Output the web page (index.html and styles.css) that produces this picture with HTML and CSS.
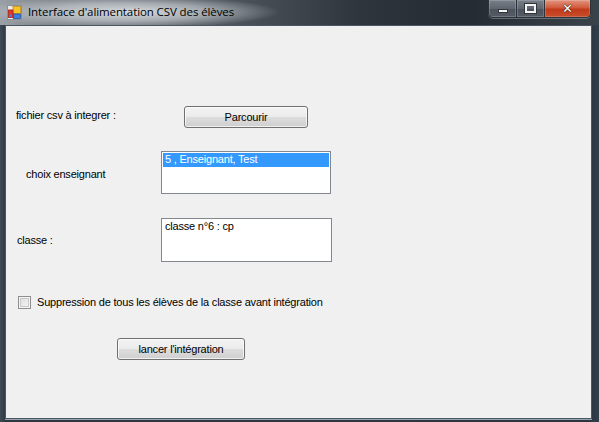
FILE: index.html
```html
<!DOCTYPE html>
<html lang="fr">
<head>
<meta charset="utf-8">
<title>Interface d'alimentation CSV des élèves</title>
<link rel="stylesheet" href="styles.css">
</head>
<body>
<div class="window">
  <div class="titlebar">
    <svg class="app-icon" width="15" height="15" viewBox="0 0 15 15">
      <rect x="0.5" y="0.5" width="14" height="14" fill="#e8eaec" stroke="#8a9096"/>
      <rect x="6" y="1.5" width="7.5" height="7" fill="#f7c325" stroke="#c98d0a" stroke-width="0.8"/>
      <rect x="1.5" y="5" width="4.5" height="7.5" fill="#e23a2a" stroke="#a81d12" stroke-width="0.8"/>
      <rect x="6.5" y="9" width="7" height="4.5" fill="#3d7ee0" stroke="#1e50a8" stroke-width="0.8"/>
      <rect x="2.5" y="9.5" width="2.5" height="2.5" fill="#3d7ee0"/>
    </svg>
    <span class="title">Interface d'alimentation CSV des élèves</span>
    <div class="controls">
      <div class="ctl ctl-min"><span class="glyph-min"></span></div>
      <div class="ctl ctl-max"><span class="glyph-max"></span></div>
      <div class="ctl ctl-close"><span class="glyph-close">✕</span></div>
    </div>
  </div>
  <div class="client">
    <div class="row row-file">
      <span class="label label-file">fichier csv à integrer :</span>
      <button class="btn btn-browse">Parcourir</button>
    </div>
    <div class="row row-teacher">
      <span class="label label-teacher">choix enseignant</span>
      <div class="listbox listbox-teacher">
        <div class="item selected">5 , Enseignant, Test</div>
      </div>
    </div>
    <div class="row row-class">
      <span class="label label-class">classe :</span>
      <div class="listbox listbox-class">
        <div class="item">classe n°6 : cp</div>
      </div>
    </div>
    <label class="row row-check">
      <span class="checkbox"></span>
      <span class="check-text">Suppression de tous les élèves de la classe avant intégration</span>
    </label>
    <div class="row row-run">
      <button class="btn btn-run">lancer l'intégration</button>
    </div>
  </div>
</div>
</body>
</html>
```

FILE: styles.css
```css
* { box-sizing: border-box; }

html, body {
  margin: 0;
  padding: 0;
  background: #2b3641;
}

.window {
  width: 599px;
  height: 422px;
  display: flex;
  flex-direction: column;
  background: linear-gradient(90deg, #3e4a55 0, #2d3843 6px, #2b3641 590px, #33404b 599px);
  overflow: hidden;
}

.titlebar {
  height: 25px;
  flex: none;
  display: flex;
  align-items: flex-start;
  position: relative;
  background:
    radial-gradient(ellipse 150px 16px at 130px 12px, rgba(235,238,240,0.85) 0, rgba(220,224,228,0.55) 55%, rgba(200,205,210,0) 100%),
    linear-gradient(90deg, #9aa0a5 0, #7c838a 50px, #50585f 220px, #2e353c 360px, #252b32 470px, #3a424a 599px);
}

.app-icon {
  margin: 5px 0 0 7px;
  flex: none;
}

.title {
  margin: 4px 0 0 6px;
  font-family: "Open Sans", "Liberation Sans", sans-serif;
  font-size: 11.5px;
  line-height: 16px;
  color: #000;
  letter-spacing: -0.1px;
}

.controls {
  margin-left: auto;
  margin-right: 8px;
  display: flex;
  height: 18px;
  border: 1px solid #2c3238;
  border-top: none;
  border-radius: 0 0 5px 5px;
  overflow: hidden;
  box-shadow: 0 1px 0 rgba(200,210,220,0.35);
}

.ctl {
  height: 17px;
  display: flex;
  align-items: center;
  justify-content: center;
  border-left: 1px solid #2c3238;
  box-shadow: inset 0 0 0 1px rgba(255,255,255,0.18);
}

.ctl:first-child { border-left: none; }

.ctl-min {
  width: 27px;
  background: linear-gradient(#79808a 0, #5f666f 50%, #4b525b 51%, #555c66 100%);
}

.ctl-max {
  width: 28px;
  background: linear-gradient(#79808a 0, #5f666f 50%, #4b525b 51%, #555c66 100%);
}

.ctl-close {
  width: 46px;
  background: linear-gradient(#e3957f 0, #d05a3d 45%, #c13a1b 55%, #c94d2a 100%);
}

.glyph-min {
  display: block;
  width: 10px;
  height: 4px;
  margin-top: 5px;
  background: #f4f4f4;
  border: 1px solid #30363c;
}

.glyph-max {
  display: block;
  width: 11px;
  height: 9px;
  border: 2px solid #f4f4f4;
  outline: 1px solid #30363c;
}

.glyph-close {
  font-family: "DejaVu Sans", sans-serif;
  font-weight: bold;
  font-size: 13px;
  line-height: 13px;
  color: #fafafa;
  text-shadow: 0 0 1px #4a1a10, 0 0 1px #4a1a10, 0 0 1px #4a1a10;
}

.client {
  flex: none;
  margin: 0 7px 0 5px;
  height: 394px;
  background: #f0f0f0;
  border: 1px solid #4a5866;
  box-shadow: 0 1px 0 #9aa4ae;
  position: relative;
  font-family: "Liberation Sans", Arial, sans-serif;
  font-size: 11px;
  letter-spacing: -0.2px;
  color: #000;
  padding-top: 80px;
}

.row {
  display: flex;
  align-items: flex-start;
}

.label {
  display: block;
  line-height: 13px;
}

.row-file { height: 22px; }
.label-file { margin-left: 10px; margin-top: 3px; width: 168px; }

.btn {
  font-family: "Liberation Sans", Arial, sans-serif;
  font-size: 11px;
  letter-spacing: -0.2px;
  color: #000;
  height: 22px;
  padding: 0;
  border: 1px solid #707070;
  border-radius: 3px;
  background: linear-gradient(#f3f3f3 0, #ebebeb 50%, #dddddd 51%, #cfcfcf 100%);
  box-shadow: inset 0 0 0 1px rgba(255,255,255,0.7);
  line-height: 18px;
}

.btn-browse { width: 124px; }

.row-teacher { margin-top: 23px; }
.label-teacher { margin-left: 20px; margin-top: 17px; width: 135px; }

.listbox {
  background: #fff;
  border: 1px solid #828790;
  padding: 1px;
}

.listbox-teacher { width: 170px; height: 43px; }
.listbox-class { width: 171px; height: 44px; }

.item {
  height: 14px;
  line-height: 13px;
  padding-left: 2px;
  white-space: nowrap;
}

.item.selected {
  background: #3399ff;
  color: #fff;
}

.row-class { margin-top: 24px; }
.label-class { margin-left: 11px; margin-top: 16px; width: 144px; }

.row-check {
  margin-top: 34px;
  align-items: center;
  height: 13px;
}

.checkbox {
  margin-left: 12px;
  width: 13px;
  height: 13px;
  border: 1px solid #8e8f8f;
  background: linear-gradient(135deg, #dcdcdc 0, #f6f6f6 100%);
  box-shadow: inset 0 0 0 1px #f4f4f4, inset 0 0 0 2px #c9c9c9;
  flex: none;
}

.check-text {
  margin-left: 6px;
  line-height: 13px;
}

.row-run { margin-top: 29px; }
.btn-run { margin-left: 111px; width: 128px; }
```
